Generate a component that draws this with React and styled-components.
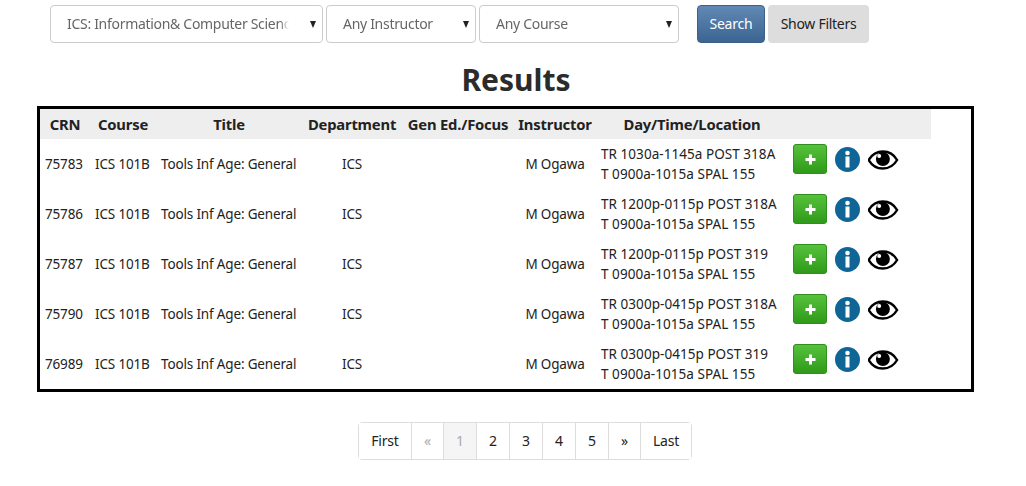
import React from 'react';
import styled, { createGlobalStyle } from 'styled-components';

const Global = createGlobalStyle`
  html, body { margin: 0; padding: 0; background: #fff; }
  body { font-family: "Noto Sans", "Open Sans", sans-serif; font-size: 14px; color: #222; }
`;

const Page = styled.div`
  width: 1026px;
  height: 486px;
  overflow: hidden;
  display: flex;
  flex-direction: column;
  box-sizing: border-box;
  padding-top: 5px;
`;

const Toolbar = styled.div`
  display: flex;
  height: 38px;
  padding-left: 50px;
  gap: 3px;
`;

const SelectBox = styled.div`
  width: ${p => p.$w}px;
  box-sizing: border-box;
  border: 1px solid #ccc;
  border-radius: 4px;
  display: flex;
  align-items: center;
  justify-content: space-between;
  padding: 0 5px 2px 16px;
  color: #666;
  font-size: 14px;
  letter-spacing: -0.3px;
  white-space: nowrap;
  overflow: hidden;
`;

const SelectLabel = styled.span`
  width: ${p => p.$w}px;
  overflow: hidden;
  mask-image: linear-gradient(to right, #000 96%, transparent);
`;

const Caret = styled.span`
  width: 0;
  height: 0;
  flex: none;
  border-left: 3.5px solid transparent;
  border-right: 3.5px solid transparent;
  border-top: 7px solid #222;
  margin: 2px 1px 0 0;
`;

const SearchButton = styled.button`
  width: 68px;
  margin-left: 15px;
  border: 1px solid #3a5f89;
  border-radius: 4px;
  background: linear-gradient(#6189b5, #3c6490);
  color: #fff;
  font: inherit;
  padding: 0 0 2px;
  letter-spacing: -0.2px;
`;

const FilterButton = styled.button`
  width: 101px;
  border: none;
  border-radius: 4px;
  background: #ddd;
  color: #222;
  font: inherit;
  padding: 0 0 2px;
  letter-spacing: -0.28px;
`;

const Heading = styled.h1`
  margin: 16px 0 0;
  height: 47px;
  line-height: 42px;
  font-size: 30px;
  font-weight: 700;
  text-align: center;
  color: #2b2b2b;
  padding-left: 6px;
`;

const ResultsFrame = styled.div`
  width: 937px;
  height: 286px;
  box-sizing: border-box;
  margin-left: 37px;
  border: 3px solid #000;
`;

const Table = styled.table`
  width: 891px;
  table-layout: fixed;
  border-collapse: collapse;
  color: #222;
`;

const HeadRow = styled.tr`
  height: 30px;
  background: #eee;
`;

const Th = styled.th`
  width: ${p => p.$w}px;
  padding: 0 0 1px;
  font-size: 14.8px;
  font-weight: 700;
  text-align: center;
  white-space: nowrap;
  color: #222;
  letter-spacing: -0.2px;
`;

const Row = styled.tr`
  height: 50px;
`;

const Td = styled.td`
  padding: 0 0 0 ${p => p.$center ? 0 : 5}px;
  text-align: ${p => p.$center ? 'center' : 'left'};
  white-space: nowrap;
  font-size: 13.5px;
  letter-spacing: -0.16px;
`;

const Schedule = styled.div`
  line-height: 20px;
  font-size: 13.5px;
  letter-spacing: 0.05px;
`;

const Actions = styled.div`
  display: flex;
  align-items: center;
  gap: 8px;
  margin-top: -10px;
`;

const AddButton = styled.button`
  width: 34px;
  height: 30px;
  box-sizing: border-box;
  border: 1px solid #2f8f1c;
  border-radius: 3px;
  background: linear-gradient(#56c23b, #2f9a1a);
  padding: 0;
  display: flex;
  align-items: center;
  justify-content: center;
`;

const Pager = styled.nav`
  display: flex;
  align-self: flex-start;
  margin: 30px 0 0 358px;
  height: 38px;
  box-sizing: border-box;
  border: 1px solid #ddd;
  border-radius: 4px;
`;

const PageItem = styled.a`
  width: ${p => p.$w}px;
  box-sizing: border-box;
  display: flex;
  align-items: center;
  justify-content: center;
  padding-bottom: 2px;
  border-left: ${p => p.$first ? 'none' : '1px solid #ddd'};
  color: ${p => p.$muted ? '#aaa' : '#222'};
  background: ${p => p.$active ? '#f5f5f5' : '#fff'};
  font-size: 14px;
  letter-spacing: -0.2px;
`;

const Plus = () => (
  <svg width="13" height="13" viewBox="0 0 13 13" aria-hidden="true">
    <path d="M5 1.500h3V5h3.500v3H8v3.500H5V8H1.500V5H5z" fill="#fff" />
  </svg>
);

const InfoIcon = () => (
  <svg width="25" height="25" viewBox="0 0 25 25" aria-hidden="true">
    <circle cx="12.500" cy="12.500" r="12.500" fill="#0f6596" />
    <circle cx="12.500" cy="6" r="2.300" fill="#fff" />
    <rect x="10.500" y="9.500" width="4" height="11" fill="#fff" />
  </svg>
);

const EyeIcon = () => (
  <svg width="31" height="24" viewBox="0.600 -1 31 24" aria-hidden="true">
    <path d="M1.300 12C4.500 6.500 9.500 3.500 15.500 3.500S26.500 6.500 29.700 12C26.500 17.500 21.500 20.500 15.500 20.500S4.500 17.500 1.300 12Z" fill="#fff" stroke="#000" strokeWidth="2.400" />
    <circle cx="15.500" cy="11" r="7" fill="#000" />
    <circle cx="11.800" cy="8" r="2" fill="#fff" />
  </svg>
);

const columns = [
  ['CRN', 50], ['Course', 66], ['Title', 146], ['Department', 100],
  ['Gen Ed./Focus', 112], ['Instructor', 82], ['Day/Time/Location', 192], ['', 143],
];

const rows = [
  ['75783', 'TR 1030a-1145a POST 318A'],
  ['75786', 'TR 1200p-0115p POST 318A'],
  ['75787', 'TR 1200p-0115p POST 319'],
  ['75790', 'TR 0300p-0415p POST 318A'],
  ['76989', 'TR 0300p-0415p POST 319'],
];

const pages = [
  ['First', 52], ['«', 32, true], ['1', 33, true, true], ['2', 33], ['3', 33],
  ['4', 33], ['5', 33], ['»', 32], ['Last', 51],
];

export default function App() {
  return (
    <Page>
      <Global />
      <Toolbar>
        <SelectBox $w={273}><SelectLabel $w={222}>ICS: Information&amp; Computer Science</SelectLabel><Caret /></SelectBox>
        <SelectBox $w={150}><SelectLabel $w={110}>Any Instructor</SelectLabel><Caret /></SelectBox>
        <SelectBox $w={200}><SelectLabel $w={150}>Any Course</SelectLabel><Caret /></SelectBox>
        <SearchButton>Search</SearchButton>
        <FilterButton>Show Filters</FilterButton>
      </Toolbar>
      <Heading>Results</Heading>
      <ResultsFrame>
        <Table>
          <thead>
            <HeadRow>
              {columns.map(([t, w], i) => <Th key={i} $w={w}>{t}</Th>)}
            </HeadRow>
          </thead>
          <tbody>
            {rows.map(([crn, time]) => (
              <Row key={crn}>
                <Td>{crn}</Td>
                <Td>ICS 101B</Td>
                <Td>Tools Inf Age: General</Td>
                <Td $center>ICS</Td>
                <Td />
                <Td $center>M Ogawa</Td>
                <Td>
                  <Schedule>{time}<br />T 0900a-1015a SPAL 155</Schedule>
                </Td>
                <Td>
                  <Actions>
                    <AddButton aria-label="Add"><Plus /></AddButton>
                    <InfoIcon />
                    <EyeIcon />
                  </Actions>
                </Td>
              </Row>
            ))}
          </tbody>
        </Table>
      </ResultsFrame>
      <Pager>
        {pages.map(([t, w, muted, active], i) => (
          <PageItem key={t} $w={w} $first={i === 0} $muted={muted} $active={active}>{t}</PageItem>
        ))}
      </Pager>
    </Page>
  );
}
